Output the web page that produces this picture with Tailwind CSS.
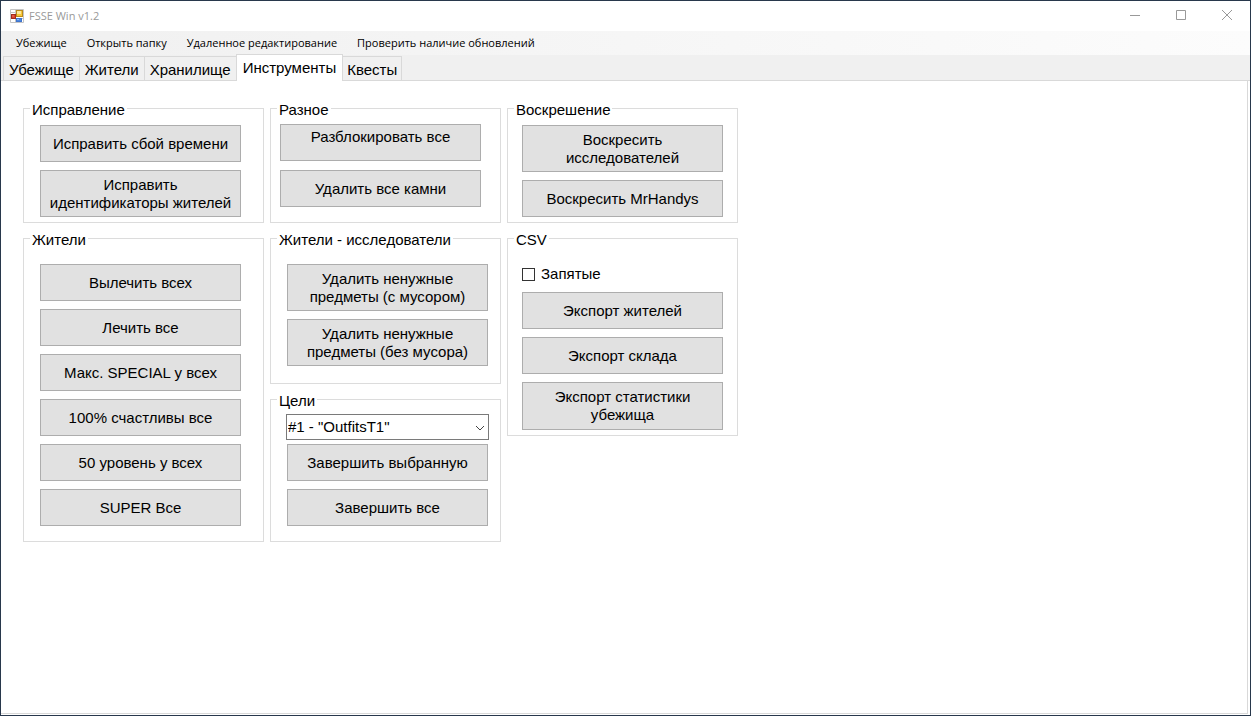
<!DOCTYPE html>
<html lang="ru">
  <head>
    <meta charset="UTF-8" />
    <meta name="viewport" content="width=device-width, initial-scale=1.0" />
    <title>FSSE Win v1.2</title>
    <script src="https://cdn.jsdelivr.net/npm/@tailwindcss/browser@4"></script>
  </head>
  <body class="bg-white font-['Liberation_Sans',sans-serif] text-[15px] leading-[18px] text-black">
    <div class="flex min-h-screen flex-col border border-[#28384c] bg-white">
      <!-- Title bar -->
      <header class="flex h-[30px] items-center justify-between pl-2">
        <div class="flex items-center gap-1 font-['Open_Sans',sans-serif] text-[11px] text-[#999]">
          <svg class="h-4 w-4" viewBox="0 0 16 16" aria-hidden="true">
            <path d="M1.500 1.500h13v13h-13zM1.500 4.500h5M6.500 1.500v13M6.500 10.500h8M12.500 10.500v4" fill="#fff" stroke="#c4c4c4" />
            <rect x="2.500" y="6.500" width="4" height="4" fill="#d8402c" stroke="#a02a1c" />
            <rect x="3.500" y="7.500" width="1" height="1" fill="#f5a08a" />
            <rect x="7.500" y="2.500" width="6" height="6" fill="#f8c838" stroke="#b98a1c" />
            <rect x="8" y="3" width="4" height="3" fill="#fde89a" />
            <rect x="7.500" y="10.500" width="5" height="3" fill="#4a86e0" stroke="#3f74cc" />
            <rect x="8" y="11" width="2" height="1" fill="#8fb8f4" />
          </svg>
          <h1>FSSE Win v1.2</h1>
        </div>
        <div class="flex text-[#999]">
          <button type="button" aria-label="Свернуть" class="flex h-7 w-[46px] items-center justify-center">
            <svg class="h-3 w-3" viewBox="0 0 12 12" fill="none" stroke="currentColor"><path d="M1 5.500h10" /></svg>
          </button>
          <button type="button" aria-label="Развернуть" class="flex h-7 w-[46px] items-center justify-center">
            <svg class="h-3 w-3" viewBox="0 0 12 12" fill="none" stroke="currentColor"><path d="M1.500 .5h9v9h-9z" /></svg>
          </button>
          <button type="button" aria-label="Закрыть" class="flex h-7 w-[46px] items-center justify-center">
            <svg class="h-3 w-3" viewBox="0 0 12 12" fill="none" stroke="currentColor"><path d="M1 0l10 10M11 0L1 10" /></svg>
          </button>
        </div>
      </header>

      <!-- Menu -->
      <nav class="flex h-6 items-center gap-5 bg-linear-to-r from-[#f0f0f0] to-[#fcfcfc] pl-[15px] font-['Open_Sans',sans-serif] text-[11px]">
        <button type="button">Убежище</button>
        <button type="button">Открыть папку</button>
        <button type="button">Удаленное редактирование</button>
        <button type="button">Проверить наличие обновлений</button>
      </nav>

      <!-- Tabs -->
      <div role="tablist" class="flex h-[26px] items-end border-b border-[#d9d9d9] bg-[#f0f0f0] pl-0.5">
        <button type="button" role="tab" class="h-6 border-x border-t border-[#d9d9d9] px-[5px] pt-0.5">Убежище</button>
        <button type="button" role="tab" class="h-6 border-t border-r border-[#d9d9d9] px-[5px] pt-0.5">Жители</button>
        <button type="button" role="tab" class="h-6 border-t border-[#d9d9d9] px-[5px] pt-0.5">Хранилище</button>
        <button type="button" role="tab" aria-selected="true" class="-mb-px h-[27px] border-x border-t border-[#d9d9d9] bg-white px-1.5">Инструменты</button>
        <button type="button" role="tab" class="h-6 border-t border-r border-[#d9d9d9] px-1 pt-0.5">Квесты</button>
      </div>

      <!-- Tools page -->
      <main class="mr-0.5 mb-px flex flex-1 items-start gap-1.5 border-r border-b border-[#d9d9d9] pt-[17px] pl-[22px]">
        <div class="flex w-[241px] flex-col gap-[5px]">
          <fieldset class="min-h-[125px] border border-[#dcdcdc] pl-4">
            <legend class="-ml-2.5 px-0.5 pt-1 leading-4">Исправление</legend>
            <div class="flex w-[201px] flex-col gap-2 pt-[7px]">
              <button type="button" class="h-[37px] border border-[#adadad] bg-[#e1e1e1] hover:border-[#0078d7] hover:bg-[#e5f1fb]">Исправить сбой времени</button>
              <button type="button" class="h-[47px] border border-[#adadad] bg-[#e1e1e1] hover:border-[#0078d7] hover:bg-[#e5f1fb]">Исправить<br />идентификаторы жителей</button>
            </div>
          </fieldset>
          <fieldset class="border border-[#dcdcdc] pb-[15px] pl-4">
            <legend class="-ml-2.5 px-0.5 pt-1 leading-4">Жители</legend>
            <div class="flex w-[201px] flex-col gap-2 pt-4">
              <button type="button" class="h-[37px] border border-[#adadad] bg-[#e1e1e1] hover:border-[#0078d7] hover:bg-[#e5f1fb]">Вылечить всех</button>
              <button type="button" class="h-[37px] border border-[#adadad] bg-[#e1e1e1] hover:border-[#0078d7] hover:bg-[#e5f1fb]">Лечить все</button>
              <button type="button" class="h-[37px] border border-[#adadad] bg-[#e1e1e1] hover:border-[#0078d7] hover:bg-[#e5f1fb]">Макс. SPECIAL у всех</button>
              <button type="button" class="h-[37px] border border-[#adadad] bg-[#e1e1e1] hover:border-[#0078d7] hover:bg-[#e5f1fb]">100% счастливы все</button>
              <button type="button" class="h-[37px] border border-[#adadad] bg-[#e1e1e1] hover:border-[#0078d7] hover:bg-[#e5f1fb]">50 уровень у всех</button>
              <button type="button" class="h-[37px] border border-[#adadad] bg-[#e1e1e1] hover:border-[#0078d7] hover:bg-[#e5f1fb]">SUPER Все</button>
            </div>
          </fieldset>
        </div>

        <div class="flex w-[231px] flex-col gap-[5px]">
          <fieldset class="min-h-[125px] border border-[#dcdcdc] pl-[9px]">
            <legend class="-ml-[3px] px-0.5 pt-1 leading-4">Разное</legend>
            <div class="flex w-[201px] flex-col gap-[9px] pt-1.5">
              <button type="button" class="h-[37px] border border-[#adadad] bg-[#e1e1e1] pb-3 hover:border-[#0078d7] hover:bg-[#e5f1fb]">Разблокировать все</button>
              <button type="button" class="h-[37px] border border-[#adadad] bg-[#e1e1e1] hover:border-[#0078d7] hover:bg-[#e5f1fb]">Удалить все камни</button>
            </div>
          </fieldset>
          <fieldset class="border border-[#dcdcdc] pb-[17px] pl-4">
            <legend class="-ml-2.5 px-0.5 pt-1 leading-4">Жители - исследователи</legend>
            <div class="flex w-[201px] flex-col gap-2 pt-4">
              <button type="button" class="h-[47px] border border-[#adadad] bg-[#e1e1e1] hover:border-[#0078d7] hover:bg-[#e5f1fb]">Удалить ненужные<br />предметы (с мусором)</button>
              <button type="button" class="h-[47px] border border-[#adadad] bg-[#e1e1e1] hover:border-[#0078d7] hover:bg-[#e5f1fb]">Удалить ненужные<br />предметы (без мусора)</button>
            </div>
          </fieldset>
          <fieldset class="border border-[#dcdcdc] pb-[15px] pl-[15px]">
            <legend class="-ml-[9px] px-0.5 pt-1 leading-4">Цели</legend>
            <div class="w-[203px] pt-[5px]">
              <div class="relative">
                <select aria-label="Цель" class="block h-[26px] w-full appearance-none border border-[#7a7a7a] bg-white pl-px">
                  <option>#1 - "OutfitsT1"</option>
                </select>
                <svg class="pointer-events-none absolute top-2.5 right-1 h-2 w-2.5" viewBox="0 0 10 8" fill="none" stroke="#444"><path d="M1 2l4 4 4-4" /></svg>
              </div>
              <div class="flex flex-col gap-2 px-px pt-1">
                <button type="button" class="h-[37px] border border-[#adadad] bg-[#e1e1e1] hover:border-[#0078d7] hover:bg-[#e5f1fb]">Завершить выбранную</button>
                <button type="button" class="h-[37px] border border-[#adadad] bg-[#e1e1e1] hover:border-[#0078d7] hover:bg-[#e5f1fb]">Завершить все</button>
              </div>
            </div>
          </fieldset>
        </div>

        <div class="flex w-[231px] flex-col gap-[5px]">
          <fieldset class="min-h-[125px] border border-[#dcdcdc] pl-3.5">
            <legend class="-ml-2 px-0.5 pt-1 leading-4">Воскрешение</legend>
            <div class="flex w-[201px] flex-col gap-2 pt-[7px]">
              <button type="button" class="h-[47px] border border-[#adadad] bg-[#e1e1e1] hover:border-[#0078d7] hover:bg-[#e5f1fb]">Воскресить<br />исследователей</button>
              <button type="button" class="h-[37px] border border-[#adadad] bg-[#e1e1e1] hover:border-[#0078d7] hover:bg-[#e5f1fb]">Воскресить MrHandys</button>
            </div>
          </fieldset>
          <fieldset class="border border-[#dcdcdc] pb-[5px] pl-3.5">
            <legend class="-ml-2 px-0.5 pt-1 leading-4">CSV</legend>
            <div class="flex w-[201px] flex-col gap-2 pt-4">
              <label class="flex h-5 items-center gap-1.5">
                <input type="checkbox" class="h-[13px] w-[13px] appearance-none border border-[#333] bg-white checked:bg-[#333]" />
                Запятые
              </label>
              <button type="button" class="h-[37px] border border-[#adadad] bg-[#e1e1e1] hover:border-[#0078d7] hover:bg-[#e5f1fb]">Экспорт жителей</button>
              <button type="button" class="h-[37px] border border-[#adadad] bg-[#e1e1e1] hover:border-[#0078d7] hover:bg-[#e5f1fb]">Экспорт склада</button>
              <button type="button" class="h-12 border border-[#adadad] bg-[#e1e1e1] hover:border-[#0078d7] hover:bg-[#e5f1fb]">Экспорт статистики<br />убежища</button>
            </div>
          </fieldset>
        </div>
      </main>
    </div>
  </body>
</html>
